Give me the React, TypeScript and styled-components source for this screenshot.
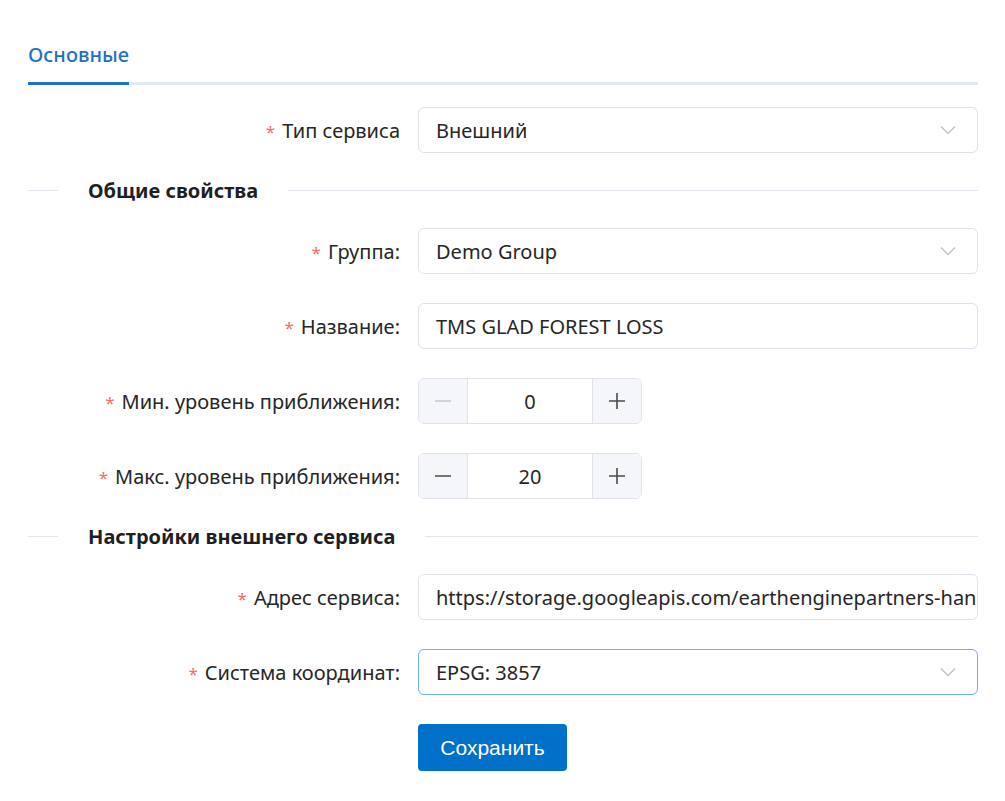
import React, { useState } from 'react';
import styled, { createGlobalStyle } from 'styled-components';

const GlobalStyle = createGlobalStyle`
  body {
    margin: 0;
    background: #ffffff;
    font-family: "Noto Sans", "Open Sans", sans-serif;
    color: #262626;
  }
`;

const Page = styled.div`
  padding: 28px 27px 28px 28px;
`;

const TabBar = styled.div`
  display: flex;
  border-bottom: 3px solid #e4e8ef;
`;

const Tab = styled.div<{ $active?: boolean }>`
  height: 54px;
  line-height: 54px;
  font-size: 20px;
  font-weight: 500;
  color: ${p => (p.$active ? '#1a73c8' : '#595959')};
  margin-bottom: -3px;
  border-bottom: 3px solid ${p => (p.$active ? '#1a73c8' : 'transparent')};
`;

const Form = styled.form`
  display: flex;
  flex-direction: column;
  padding-top: 22px;
`;

const Row = styled.div`
  display: grid;
  grid-template-columns: 372px 1fr;
  column-gap: 18px;
  align-items: center;
  margin-bottom: 29px;
`;

const Label = styled.label`
  text-align: right;
  font-size: 20px;
  color: #262626;
  white-space: nowrap;
`;

const Required = styled.span`
  color: #f56c6c;
  margin-right: 7px;
  font-size: 17px;
`;

const Field = styled.div<{ $focused?: boolean }>`
  height: 46px;
  box-sizing: border-box;
  border: 1px solid ${p => (p.$focused ? '#6aaef5' : '#dfe2ea')};
  border-radius: 6px;
  display: flex;
  align-items: center;
  padding: 0 17px;
  font-size: 20px;
  color: #262626;
  background: #fff;
  overflow: hidden;
  white-space: nowrap;
`;

const Value = styled.span`
  flex: 1;
  overflow: hidden;
`;

const Chevron = styled.svg`
  width: 16px;
  height: 10px;
  margin-right: 4px;
  flex: none;
`;

const Divider = styled.div`
  display: flex;
  align-items: center;
  height: 24px;
  margin: -4px 0 26px;
  &::before {
    content: '';
    width: 30px;
    border-top: 1px solid #e2e5eb;
  }
  &::after {
    content: '';
    flex: 1;
    border-top: 1px solid #e2e5eb;
  }
`;

const DividerText = styled.span`
  padding: 0 30px;
  font-size: 20px;
  font-weight: 700;
  color: #1f1f1f;
`;

const Stepper = styled.div`
  display: flex;
  width: 224px;
  height: 46px;
  box-sizing: border-box;
  border: 1px solid #dfe2ea;
  border-radius: 6px;
  overflow: hidden;
`;

const StepButton = styled.div<{ $disabled?: boolean }>`
  width: 48px;
  flex: none;
  display: flex;
  align-items: center;
  justify-content: center;
  background: #f5f6f9;
  color: ${p => (p.$disabled ? '#c4c6cc' : '#4a4a4a')};
`;

const StepValue = styled.div`
  flex: 1;
  display: flex;
  align-items: center;
  justify-content: center;
  font-size: 20px;
  border-left: 1px solid #dfe2ea;
  border-right: 1px solid #dfe2ea;
`;

const SubmitButton = styled.button`
  width: 149px;
  height: 47px;
  border: none;
  border-radius: 4px;
  background: #0070c9;
  color: #fff;
  font-family: "Liberation Sans", Arial, sans-serif;
  font-size: 21px;
  cursor: pointer;
`;

const ChevronIcon = () => (
  <Chevron viewBox="0 0 16 10">
    <path d="M1 1.5 L8 8.5 L15 1.5" fill="none" stroke="#bfc2c8" strokeWidth="1.3" />
  </Chevron>
);

const Minus = () => (
  <svg width="18" height="18" viewBox="0 0 18 18">
    <path d="M1 9 H17" stroke="currentColor" strokeWidth="1.6" />
  </svg>
);

const Plus = () => (
  <svg width="18" height="18" viewBox="0 0 18 18">
    <path d="M1 9 H17 M9 1 V17" stroke="currentColor" strokeWidth="1.6" />
  </svg>
);

const Select: React.FC<{ value: string; focused?: boolean }> = ({ value, focused }) => (
  <Field $focused={focused}>
    <Value>{value}</Value>
    <ChevronIcon />
  </Field>
);

const NumberInput: React.FC<{ value: number; min?: number }> = ({ value, min = 0 }) => (
  <Stepper>
    <StepButton $disabled={value <= min}>
      <Minus />
    </StepButton>
    <StepValue>{value}</StepValue>
    <StepButton>
      <Plus />
    </StepButton>
  </Stepper>
);

const FormRow: React.FC<{ label: string; children: React.ReactNode }> = ({ label, children }) => (
  <Row>
    <Label>
      <Required>*</Required>
      {label}
    </Label>
    {children}
  </Row>
);

export default function App() {
  const [minZoom] = useState(0);
  const [maxZoom] = useState(20);

  return (
    <Page>
      <GlobalStyle />
      <TabBar>
        <Tab $active>Основные</Tab>
      </TabBar>
      <Form onSubmit={e => e.preventDefault()}>
        <FormRow label="Тип сервиса">
          <Select value="Внешний" />
        </FormRow>

        <Divider>
          <DividerText>Общие свойства</DividerText>
        </Divider>

        <FormRow label="Группа:">
          <Select value="Demo Group" />
        </FormRow>
        <FormRow label="Название:">
          <Field>TMS GLAD FOREST LOSS</Field>
        </FormRow>
        <FormRow label="Мин. уровень приближения:">
          <NumberInput value={minZoom} />
        </FormRow>
        <FormRow label="Макс. уровень приближения:">
          <NumberInput value={maxZoom} />
        </FormRow>

        <Divider>
          <DividerText>Настройки внешнего сервиса</DividerText>
        </Divider>

        <FormRow label="Адрес сервиса:">
          <Field>https://storage.googleapis.com/earthenginepartners-han</Field>
        </FormRow>
        <FormRow label="Система координат:">
          <Select value="EPSG: 3857" focused />
        </FormRow>

        <Row>
          <span />
          <div>
            <SubmitButton type="submit">Сохранить</SubmitButton>
          </div>
        </Row>
      </Form>
    </Page>
  );
}
